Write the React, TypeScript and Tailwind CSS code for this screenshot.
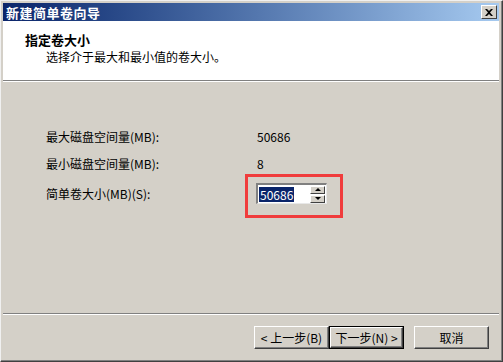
import React from "react";

const font = { fontFamily: '"Noto Sans CJK SC", "DejaVu Sans", sans-serif' };

function Btn({ children, primary = false }: { children: React.ReactNode; primary?: boolean }) {
  return (
    <div
      className={`h-[23px] flex items-center justify-center text-[12px] text-black bg-[#d4d0c8] ${
        primary ? "w-[75px] border border-black" : "w-[75px]"
      }`}
    >
      <div className="w-full h-full flex items-center justify-center border-t border-l border-t-white border-l-white border-r border-b border-r-[#404040] border-b-[#404040] shadow-[inset_-1px_-1px_0_#808080]">
        {children}
      </div>
    </div>
  );
}

export default function App() {
  return (
    <div
      className="w-[503px] h-[362px] bg-[#d4d0c8] border-t border-l border-t-[#f0f0f0] border-l-[#f0f0f0] border-r border-b border-r-[#404040] border-b-[#404040] overflow-hidden"
      style={font}
    >
      <div className="w-full h-full flex flex-col p-[2px] pb-[3px] border-r border-b border-r-[#808080] border-b-[#808080]">
        {/* title bar */}
        <div className="h-[18px] flex items-center justify-between bg-gradient-to-r from-[#0a246a] to-[#a6caf0] pl-[3px] pr-[2px]">
          <span className="text-white font-bold text-[13px] leading-none tracking-[0.5px]">新建简单卷向导</span>
          <div className="w-[16px] h-[14px] bg-[#d4d0c8] border-t border-l border-t-white border-l-white border-r border-b border-r-[#404040] border-b-[#404040] flex items-center justify-center">
            <svg width="8" height="7" viewBox="0 0 8 7">
              <path d="M0 0 L2 0 L4 2 L6 0 L8 0 L5 3.5 L8 7 L6 7 L4 5 L2 7 L0 7 L3 3.5 Z" fill="#000" />
            </svg>
          </div>
        </div>

        {/* header */}
        <div className="h-[59px] bg-white pt-[11px] pl-[22px]">
          <div className="text-[13px] font-bold text-black leading-[16px]">指定卷大小</div>
          <div className="text-[12px] text-black leading-[16px] pl-[21px] pt-[1px]">选择介于最大和最小值的卷大小。</div>
        </div>
        <div className="h-[2px] border-t border-t-[#808080] border-b border-b-white" />

        {/* body */}
        <div className="flex-1 flex flex-col pl-[43px] pt-[48px]">
          <div className="flex items-center h-[14px] text-[12px] text-black">
            <span className="w-[211px]">最大磁盘空间量(MB):</span>
            <span>50686</span>
          </div>
          <div className="flex items-center h-[14px] mt-[13px] text-[12px] text-black">
            <span className="w-[211px]">最小磁盘空间量(MB):</span>
            <span>8</span>
          </div>
          <div className="flex items-center mt-[12px] text-[12px] text-black">
            <span className="w-[210px]">简单卷大小(MB)(S):</span>
            <div className="relative">
              <div className="w-[71px] h-[21px] bg-white border-t-2 border-l-2 border-t-[#808080] border-l-[#808080] border-r border-b border-r-[#e8e8e8] border-b-[#e8e8e8] flex items-center">
                <span className="ml-[1px] bg-[#0a246a] text-white text-[12px] leading-[15px] px-[1px]">50686</span>
                <div className="ml-auto mr-[1px] flex flex-col gap-[1px]">
                  <div className="w-[15px] h-[8px] bg-[#d4d0c8] border-t border-l border-t-white border-l-white border-r border-b border-r-[#404040] border-b-[#404040] flex items-center justify-center">
                    <div className="w-0 h-0 border-l-[3px] border-r-[3px] border-b-[3px] border-l-transparent border-r-transparent border-b-black" />
                  </div>
                  <div className="w-[15px] h-[8px] bg-[#d4d0c8] border-t border-l border-t-white border-l-white border-r border-b border-r-[#404040] border-b-[#404040] flex items-center justify-center">
                    <div className="w-0 h-0 border-l-[3px] border-r-[3px] border-t-[3px] border-l-transparent border-r-transparent border-t-black" />
                  </div>
                </div>
              </div>
              <div className="absolute -top-[9px] -left-[11px] w-[98px] h-[44px] border-[3px] border-[#f03c3c]" />
            </div>
          </div>

          <div className="flex-1" />
        </div>

        {/* footer */}
        <div className="h-[2px] border-t border-t-[#808080] border-b border-b-white" />
        <div className="h-[42px] flex items-start justify-end pt-[11px] pr-[10px]">
          <Btn>&lt; 上一步(B)</Btn>
          <Btn primary>下一步(N) &gt;</Btn>
          <div className="w-[10px]" />
          <Btn>取消</Btn>
        </div>
      </div>
    </div>
  );
}
